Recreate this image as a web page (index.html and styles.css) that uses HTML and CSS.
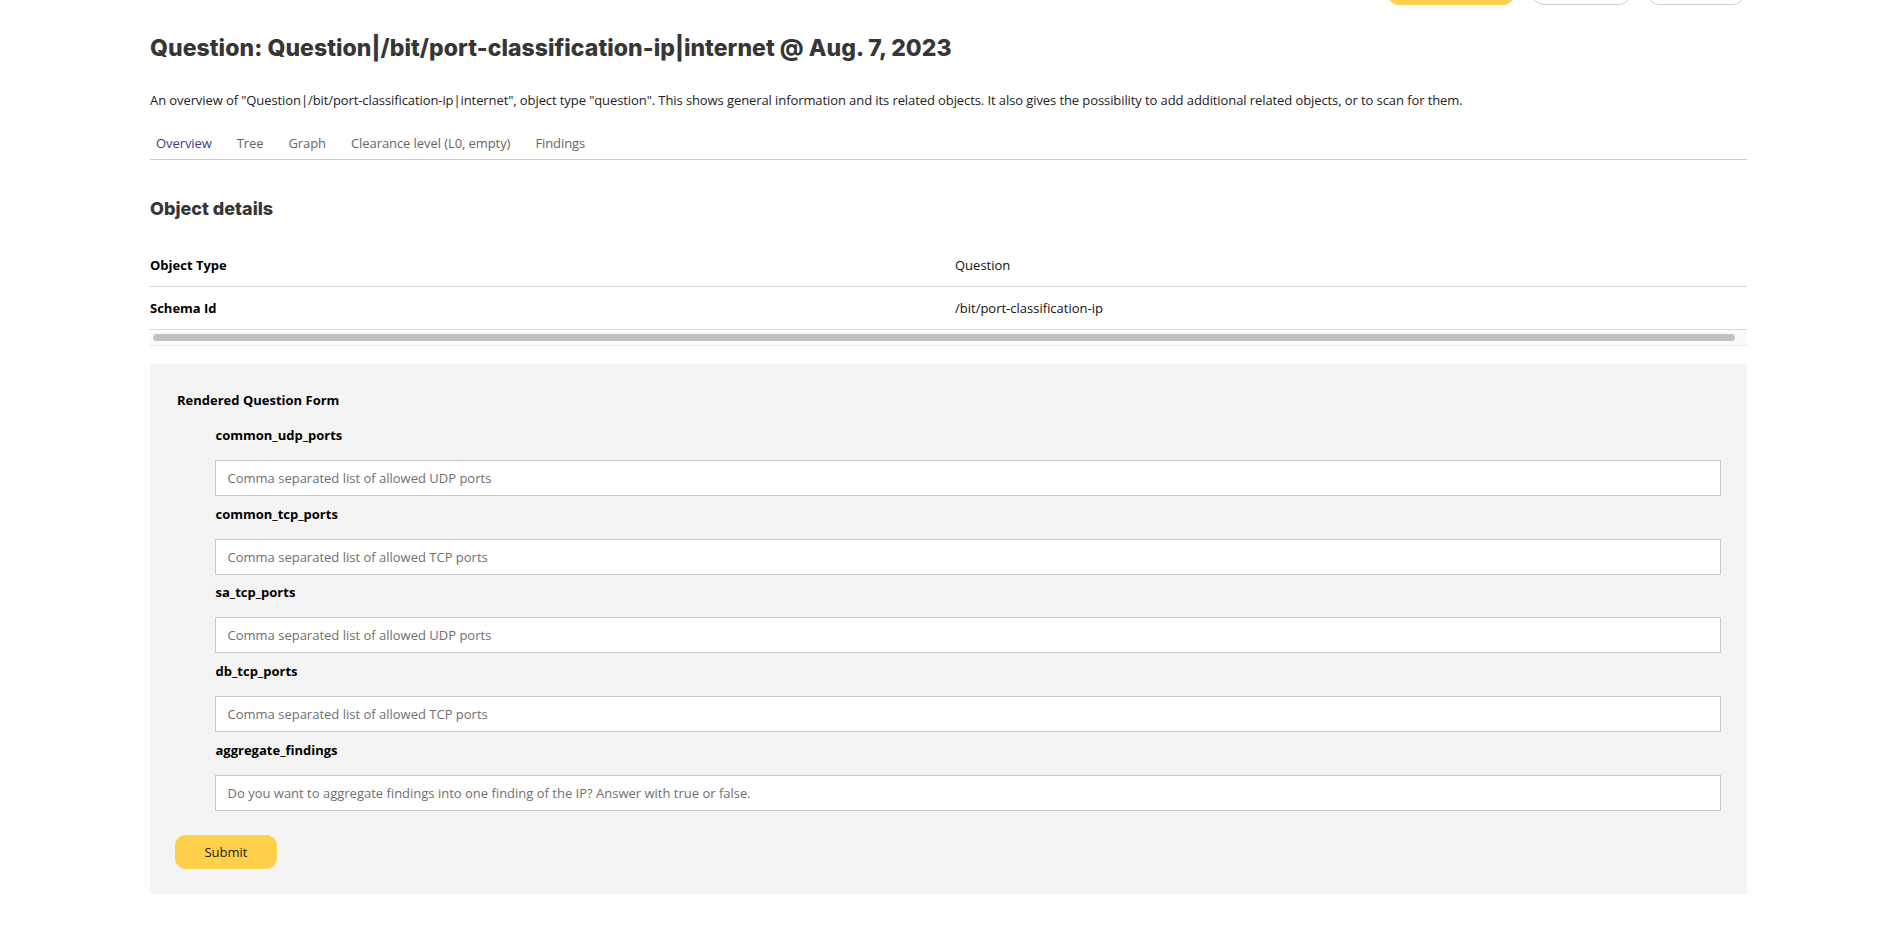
FILE: index.html
```html
<!DOCTYPE html>
<html lang="en">
<head>
<meta charset="utf-8">
<title>Question</title>
<link rel="stylesheet" href="styles.css">
</head>
<body>
<div class="page">
  <div class="toolbar">
    <span class="btn btn-primary btn-a" aria-hidden="true"></span>
    <span class="btn btn-ghost btn-b" aria-hidden="true"></span>
    <span class="btn btn-ghost btn-c" aria-hidden="true"></span>
  </div>

  <h1 class="title">Question: Question|/bit/port-classification-ip|internet @ Aug. 7, 2023</h1>
  <p class="intro">An overview of "Question|/bit/port-classification-ip|internet", object type "question". This shows general information and its related objects. It also gives the possibility to add additional related objects, or to scan for them.</p>

  <nav class="tabs">
    <a class="tab tab-active" href="#">Overview</a>
    <a class="tab" href="#">Tree</a>
    <a class="tab" href="#">Graph</a>
    <a class="tab" href="#">Clearance level (L0, empty)</a>
    <a class="tab" href="#">Findings</a>
  </nav>

  <h2 class="section-title">Object details</h2>

  <div class="details">
    <div class="row">
      <div class="cell cell-key">Object Type</div>
      <div class="cell">Question</div>
    </div>
    <div class="row">
      <div class="cell cell-key">Schema Id</div>
      <div class="cell">/bit/port-classification-ip</div>
    </div>
  </div>
  <div class="hscroll"><div class="hscroll-thumb"></div></div>

  <form class="panel">
    <div class="panel-title">Rendered Question Form</div>
    <div class="fields">
      <div class="field">
        <label class="field-label">common_udp_ports</label>
        <input class="field-input" type="text" placeholder="Comma separated list of allowed UDP ports">
      </div>
      <div class="field">
        <label class="field-label">common_tcp_ports</label>
        <input class="field-input" type="text" placeholder="Comma separated list of allowed TCP ports">
      </div>
      <div class="field">
        <label class="field-label">sa_tcp_ports</label>
        <input class="field-input" type="text" placeholder="Comma separated list of allowed UDP ports">
      </div>
      <div class="field">
        <label class="field-label">db_tcp_ports</label>
        <input class="field-input" type="text" placeholder="Comma separated list of allowed TCP ports">
      </div>
      <div class="field">
        <label class="field-label">aggregate_findings</label>
        <input class="field-input" type="text" placeholder="Do you want to aggregate findings into one finding of the IP? Answer with true or false.">
      </div>
    </div>
    <button class="submit" type="button">Submit</button>
  </form>
</div>
</body>
</html>
```

FILE: styles.css
```css
* { box-sizing: border-box; }

html, body {
  margin: 0;
  padding: 0;
  background: #ffffff;
}

body {
  font-family: "Open Sans", "Liberation Sans", sans-serif;
  font-size: 13px;
  line-height: 18px;
  color: #111111;
}

.page {
  width: 1597px;
  margin-left: 150px;
}

.toolbar {
  height: 5px;
  overflow: hidden;
  display: flex;
  justify-content: flex-end;
  align-items: flex-end;
  padding-right: 2px;
}

.btn {
  display: block;
  flex: none;
  height: 36px;
  border-radius: 12px;
}

.btn-primary {
  background: #ffd04b;
  border: 1px solid #ffd04b;
}

.btn-ghost {
  background: #ffffff;
  border: 1px solid #cfcfcf;
}

.btn-a { width: 128px; margin-right: 17px; }
.btn-b { width: 99px; margin-right: 16px; }
.btn-c { width: 98px; }

.title {
  margin: 27px 0 0;
  font-family: "Inter", "Lato", sans-serif;
  font-weight: 800;
  font-size: 23px;
  line-height: 32px;
  color: #363636;
  letter-spacing: 0.05px;
}

.intro {
  margin: 26px 0 0;
  line-height: 20px;
  color: #222222;
  letter-spacing: -0.09px;
}

.tabs {
  margin-top: 23px;
  display: flex;
  gap: 13px;
  border-bottom: 1px solid #cccccc;
}

.tab {
  padding: 0 6px 6px;
  line-height: 20px;
  color: #666666;
  text-decoration: none;
  letter-spacing: -0.08px;
}

.tab-active {
  color: #3d3a8c;
}

.section-title {
  margin: 37px 0 0;
  font-family: "Inter", "Lato", sans-serif;
  font-weight: 800;
  font-size: 18px;
  line-height: 24px;
  color: #363636;
}

.details {
  margin-top: 23px;
}

.row {
  display: grid;
  grid-template-columns: 805px 1fr;
  border-bottom: 1px solid #d6d6d6;
}

.cell {
  padding: 12px 0;
  line-height: 18px;
}

.cell-key {
  font-weight: 700;
  color: #000000;
}

.hscroll {
  height: 16px;
  background: #fafafa;
  border-bottom: 1px solid #ececec;
  padding: 4px 12px 0 3px;
}

.hscroll-thumb {
  height: 7px;
  border-radius: 4px;
  background: #c1c1c1;
}

.panel {
  margin: 18px 0 0;
  background: #f4f4f4;
  padding: 27px 26px 25px;
}

.panel-title {
  font-weight: 700;
  color: #000000;
  line-height: 18px;
  padding-left: 1px;
}

.fields {
  margin-top: 17px;
  margin-left: 38.5px;
  display: flex;
  flex-direction: column;
  gap: 8.7px;
}

.field {
  display: flex;
  flex-direction: column;
}

.field-label {
  font-weight: 700;
  color: #000000;
  line-height: 18px;
  margin-bottom: 16px;
  padding-left: 1px;
}

.field-input {
  height: 36px;
  width: 100%;
  border: 1px solid #c9c9c9;
  background: #ffffff;
  padding: 0 12px;
  font-family: inherit;
  font-size: 13px;
  color: #333333;
  outline: none;
}

.field-input::placeholder {
  color: #707070;
}

.submit {
  display: block;
  margin-top: 24px;
  margin-left: -1px;
  width: 102px;
  height: 34px;
  border: none;
  border-radius: 11px;
  background: #ffd04b;
  font-family: inherit;
  font-size: 13px;
  color: #222222;
  cursor: pointer;
}
```
